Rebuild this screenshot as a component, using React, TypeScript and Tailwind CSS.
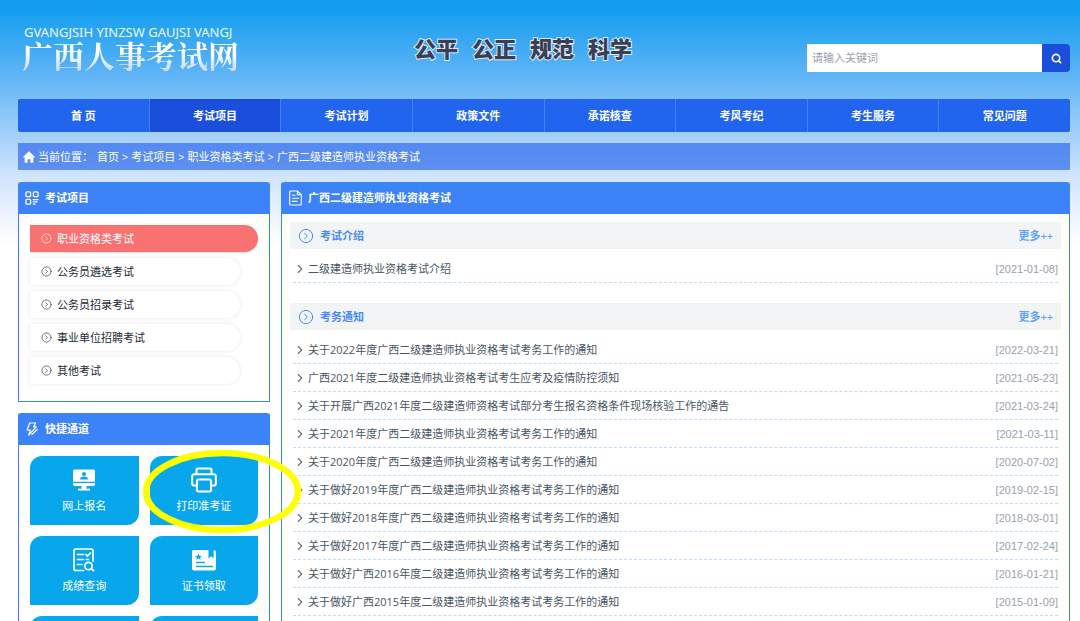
import { ReactNode, useState } from 'react';
import { ChevronRight, CircleChevronRight, Search } from 'lucide-react';

interface Notice { title: string; date: string; }
interface Section { name: string; items: Notice[]; }

const navItems = ['首 页', '考试项目', '考试计划', '政策文件', '承诺核查', '考风考纪', '考生服务', '常见问题'];
const crumbs = ['首页', '考试项目', '职业资格类考试', '广西二级建造师执业资格考试'];
const categories = ['职业资格类考试', '公务员遴选考试', '公务员招录考试', '事业单位招聘考试', '其他考试'];

const sections: Section[] = [
  { name: '考试介绍', items: [{ title: '二级建造师执业资格考试介绍', date: '2021-01-08' }] },
  {
    name: '考务通知',
    items: [
      { title: '关于2022年度广西二级建造师执业资格考试考务工作的通知', date: '2022-03-21' },
      { title: '广西2021年度二级建造师执业资格考试考生应考及疫情防控须知', date: '2021-05-23' },
      { title: '关于开展广西2021年度二级建造师资格考试部分考生报名资格条件现场核验工作的通告', date: '2021-03-24' },
      { title: '关于2021年度广西二级建造师执业资格考试考务工作的通知', date: '2021-03-11' },
      { title: '关于2020年度广西二级建造师执业资格考试考务工作的通知', date: '2020-07-02' },
      { title: '关于做好2019年度广西二级建造师执业资格考试考务工作的通知', date: '2019-02-15' },
      { title: '关于做好2018年度广西二级建造师执业资格考试考务工作的通知', date: '2018-03-01' },
      { title: '关于做好2017年度广西二级建造师执业资格考试考务工作的通知', date: '2017-02-24' },
      { title: '关于做好广西2016年度二级建造师执业资格考试考务工作的通知', date: '2016-01-21' },
      { title: '关于做好广西2015年度二级建造师执业资格考试考务工作的通知', date: '2015-01-09' },
    ],
  },
];

const HomeIcon = () => (
  <svg width="12" height="12" viewBox="0 0 12 12" fill="currentColor">
    <path d="M6 0.3 0.3 5.8Q0 6.6 0.8 6.6H1.7V11.2Q1.7 11.8 2.3 11.8H4.6V8.2H7.4V11.8H9.7Q10.3 11.8 10.3 11.2V6.6H11.2Q12 6.6 11.7 5.8Z" />
  </svg>
);

const GridIcon = () => (
  <svg width="14" height="14" viewBox="0 0 15 15" fill="none" stroke="currentColor" strokeWidth="1.4">
    <rect x="1" y="1" width="5" height="5" rx="1" />
    <rect x="9" y="1" width="5" height="5" rx="1" />
    <rect x="1" y="9" width="5" height="5" rx="1" />
    <path d="M8.3 9.2h6M8.3 11.6h5M8.3 14h3" />
  </svg>
);

const BoltIcon = () => (
  <svg width="12" height="14" viewBox="0 0 13 15" fill="none" stroke="currentColor" strokeWidth="1.3" strokeLinejoin="round" strokeLinecap="round">
    <path d="M4 1h6.4L8.2 5.2h3L3 14l1.7-5.4H1.2z" />
    <path d="M12 8 6.4 13.6" />
  </svg>
);

const DocIcon = () => (
  <svg width="13" height="16" viewBox="0 0 13 16" fill="none" stroke="currentColor" strokeWidth="1.1">
    <path d="M8.4 1H1.6Q0.7 1 0.7 2v12q0 1 0.9 1h9.8q0.9 0 0.9-1V4.8zM8.4 1v3.8h3.9" />
    <path d="M3 5.2h3.4M3 8.2h7M3 11.4h5.4" />
  </svg>
);

const MonitorIcon = () => (
  <svg width="24" height="26" viewBox="0 0 24 26" fill="none">
    <path d="M2.5 2.5h19q1.5 0 1.5 1.5v10.8H1V4q0-1.5 1.5-1.5z" fill="#fff" />
    <path d="M1 16h22v1.6q0 1.4-1.5 1.4H14.5v2.8H18V23.6H6v-1.8h3.5V19H2.5Q1 19 1 17.6z" fill="#fff" />
    <circle cx="12" cy="7" r="2" fill="#08a7eb" />
    <path d="M8 12.4q0-3 4-3t4 3z" fill="#08a7eb" />
  </svg>
);

const PrinterIcon = () => (
  <svg width="26" height="26" viewBox="0 0 26 26" fill="none" stroke="#fff" strokeWidth="2" strokeLinejoin="round">
    <path d="M5.5 7V3q0-1.5 1.5-1.5h12Q20.5 1.500 20.5 3v4" />
    <path d="M6 18.5H3Q1.2 18.5 1.2 17V9.2Q1.2 7.2 3.2 7.2h19.6q2 0 2 2V17q0 1.5-1.8 1.5h-3" />
    <rect x="6" y="12.5" width="14" height="12" rx="1.5" />
  </svg>
);

const ScoreIcon = () => (
  <svg width="24" height="26" viewBox="0 0 24 26" fill="none" stroke="#fff" strokeWidth="1.7" strokeLinecap="round">
    <path d="M11.5 23.5H4Q2 23.5 2 21.5V4Q2 2 4 2h15q2 0 2 2v10" />
    <path d="M5.5 7.5h6M5.5 12.5h6M5.5 17.5h4.5" />
    <path d="m14 7.5 1.5 1.5 3-3M14.5 12.5h2" />
    <circle cx="16.5" cy="19" r="3.7" />
    <path d="m19.3 21.7 2.2 2" />
  </svg>
);

const CertIcon = () => (
  <svg width="26" height="26" viewBox="0 0 26 26" fill="none">
    <path d="M2.5 3h15v8.6l2.6-2.3 2.5 2.3V3q2.4 0 2.4 2v16.5Q25 23.5 23 23.5H3Q1 23.5 1 21.5V4.5Q1 3 2.5 3z" fill="#fff" />
    <path d="m7.5 6.5 1 2.2 2.4.2-1.8 1.6.6 2.3-2.200-1.2-2.2 1.2.6-2.3-1.8-1.6 2.4-.2z" fill="#08a7eb" />
    <path d="M5 15.500h9M5 19.500h17" stroke="#08a7eb" strokeWidth="1.4" />
  </svg>
);

const shortcuts: { label: string; icon: ReactNode; circled?: boolean }[] = [
  { label: '网上报名', icon: <MonitorIcon /> },
  { label: '打印准考证', icon: <PrinterIcon />, circled: true },
  { label: '成绩查询', icon: <ScoreIcon /> },
  { label: '证书领取', icon: <CertIcon /> },
  { label: '', icon: null },
  { label: '', icon: null },
];

function PanelTitle({ icon, children }: { icon: ReactNode; children: ReactNode }) {
  return (
    <h2 className="flex h-8 items-center gap-[5px] rounded-t-xs bg-[#3b83f6] px-[5px] font-bold text-white">
      <span className="flex w-4 justify-center">{icon}</span>
      {children}
    </h2>
  );
}

function Header() {
  const [keyword, setKeyword] = useState('');

  return (
    <header className="flex h-[99px] items-start justify-between">
      <h1 className="flex flex-col pl-1 pt-[25px]">
        <span className="pl-[2px] font-['Noto_Sans',sans-serif] text-[13px] leading-[14px] text-white/90">GVANGJSIH YINZSW GAUJSI VANGJ</span>
        <span className="bg-linear-to-b from-white from-40% to-[#c3dbf5] bg-clip-text font-['Noto_Serif_CJK_SC','Noto_Sans_CJK_SC',serif] text-[31px] font-bold leading-8 text-transparent">
          广西人事考试网
        </span>
      </h1>
      <p className="flex gap-[14px] pt-8 text-[22px] font-black leading-8 text-[#3a3f55] [paint-order:stroke_fill] [-webkit-text-stroke:2px_#dcebfa]">
        <span>公平</span>
        <span>公正</span>
        <span>规范</span>
        <span>科学</span>
      </p>
      <form className="mt-11 flex h-7 w-[263px]" onSubmit={(e) => e.preventDefault()}>
        <input
          aria-label="请输入关键词"
          value={keyword}
          onChange={(e) => setKeyword(e.target.value)}
          placeholder="请输入关键词"
          className="min-w-0 flex-1 bg-white px-[5px] text-gray-700 outline-none placeholder:text-gray-400"
        />
        <button aria-label="搜索" className="flex w-7 items-center justify-center rounded-r-sm bg-[#1b4fdb] text-white">
          <Search size={11} strokeWidth={3.5} />
        </button>
      </form>
    </header>
  );
}

function Sidebar() {
  return (
    <aside className="relative z-10 flex w-[252px] shrink-0 flex-col gap-[11px]">
      <section className="rounded-t-xs border border-t-0 border-[#3b83f6] bg-white">
        <PanelTitle icon={<GridIcon />}>考试项目</PanelTitle>
        <ul className="flex flex-col gap-[6px] px-[11px] pb-[17px] pt-[11px]">
          {categories.map((name, i) => (
            <li key={name}>
              <a
                href="#"
                className={
                  i === 0
                    ? 'flex h-[27px] items-center gap-[5px] rounded-r-full bg-[#f97272] pl-[11px] text-white shadow-sm'
                    : 'mr-[18px] flex h-[27px] items-center gap-[5px] rounded-r-full bg-white pl-[11px] text-gray-800 shadow-[0_0_4px_rgba(0,0,0,0.1)]'
                }
              >
                <CircleChevronRight size={11} strokeWidth={1.75} className="opacity-80" />
                {name}
              </a>
            </li>
          ))}
        </ul>
      </section>

      <section className="rounded-t-xs border border-t-0 border-[#3b83f6] bg-white">
        <PanelTitle icon={<BoltIcon />}>快捷通道</PanelTitle>
        <div className="grid grid-cols-2 gap-[11px] p-[11px]">
          {shortcuts.map((s, i) => (
            <a
              key={i}
              href="#"
              className="relative flex h-[69px] flex-col items-center gap-[5px] rounded-tl-xl rounded-br-xl bg-[#08a7eb] pt-[11px] text-white"
            >
              {s.icon}
              {s.label}
              {s.circled && (
                <svg className="pointer-events-none absolute -left-2 -top-[7px]" width="160" height="85" viewBox="0 0 160 85">
                  <ellipse cx="80" cy="42.5" rx="76" ry="38.5" fill="none" stroke="#ffff00" strokeWidth="6.5" />
                </svg>
              )}
            </a>
          ))}
        </div>
      </section>
    </aside>
  );
}

function NoticeSection({ section }: { section: Section }) {
  return (
    <section>
      <div className="flex h-[27px] items-center justify-between bg-gray-100 px-2">
        <h3 className="flex items-center gap-[6px] font-bold text-[#4a8af6]">
          <CircleChevronRight size={16} strokeWidth={1.5} />
          {section.name}
        </h3>
        <a href="#" className="font-semibold text-[#60a5fa]">更多++</a>
      </div>
      <ul className="mx-[3px] pt-[6px]">
        {section.items.map((n) => (
          <li key={n.date} className="flex h-7 items-center justify-between border-b border-dashed border-[#bfdbfe]">
            <a href="#" className="flex items-center gap-px text-gray-600">
              <ChevronRight size={14} strokeWidth={2} className="text-gray-500" />
              {n.title}
            </a>
            <time className="font-['Liberation_Sans',sans-serif] text-gray-400">[{n.date}]</time>
          </li>
        ))}
      </ul>
    </section>
  );
}

export default function App() {
  return (
    <div className="h-screen overflow-hidden bg-white bg-[linear-gradient(#129cf0_0,#149ef0_10px,#5fb4f5_75px,#a6d1fb_137px,#d2e5fd_178px,#ffffff_245px)] pl-[18px] pr-[10px] font-['Open_Sans','Noto_Sans_CJK_SC',sans-serif] text-[11px] leading-4">
      <Header />

      <nav className="flex h-[33px] overflow-hidden rounded-xs bg-[#2164ed] font-bold text-white">
        {navItems.map((name, i) => (
          <a
            key={name}
            href="#"
            className={
              i === 1
                ? 'flex flex-1 items-center justify-center border-r border-[#3b83f6] bg-[#1b4fdb]'
                : 'flex flex-1 items-center justify-center border-r border-[#3b83f6] last:border-r-0'
            }
          >
            {name}
          </a>
        ))}
      </nav>

      <div className="mt-[11px] flex h-[27px] items-center bg-[#2563eb]/65 pl-[5px] text-white">
        <HomeIcon />
        <span className="pl-[3px] pr-1">当前位置：</span>
        {crumbs.map((c, i) => (
          <span key={c}>
            {i > 0 && <span className="px-[3px]">&gt;</span>}
            <a href="#">{c}</a>
          </span>
        ))}
      </div>

      <div className="mt-3 flex items-start gap-[11px]">
        <Sidebar />
        <main className="min-w-0 flex-1 rounded-t-xs border border-t-0 border-[#3b83f6] bg-white">
          <PanelTitle icon={<DocIcon />}>广西二级建造师执业资格考试</PanelTitle>
          <div className="flex flex-col gap-5 px-2 pb-5 pt-2">
            {sections.map((s) => (
              <NoticeSection key={s.name} section={s} />
            ))}
          </div>
        </main>
      </div>
    </div>
  );
}
